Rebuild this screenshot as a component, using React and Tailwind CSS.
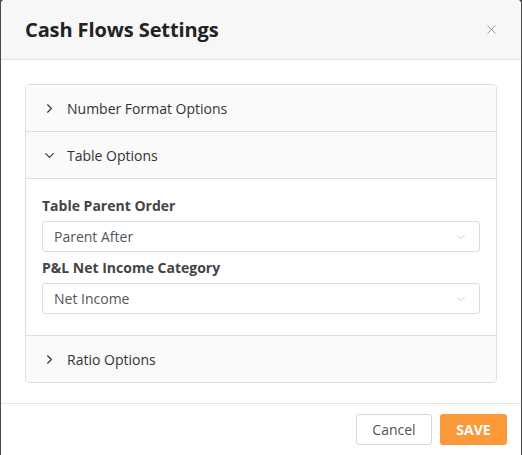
import { ChevronRight, ChevronDown, X } from 'lucide-react'

function Row({ title, open }) {
  return (
    <div className="flex items-center h-[46px] bg-[#fafafa] pl-[16px] text-[14px] text-[#333]">
      {open ? (
        <ChevronDown size={15} strokeWidth={1.8} className="text-[#333]" />
      ) : (
        <ChevronRight size={15} strokeWidth={1.8} className="text-[#333]" />
      )}
      <span className="ml-[10px]">{title}</span>
    </div>
  )
}

function Select({ value }) {
  return (
    <div className="flex items-center justify-between h-[31px] border border-[#dcdcdc] rounded-[3px] px-[11px] text-[14px] text-[#555] bg-white">
      <span>{value}</span>
      <ChevronDown size={14} strokeWidth={1.2} className="text-[#bbb]" />
    </div>
  )
}

export default function App() {
  return (
    <div className="w-[522px] h-[455px] bg-[#4a4a4a] px-[1px] overflow-hidden" style={{ fontFamily: '"Open Sans", sans-serif' }}>
      <div className="h-full bg-white rounded-t-[4px] flex flex-col">
        <div className="h-[60px] bg-[#f7f7f7] border-b border-[#e3e3e3] flex items-center justify-between pl-[24px] pr-[22px] rounded-t-[4px] shrink-0">
          <h2 className="text-[20px] font-bold text-[#222] tracking-[-0.1px]">Cash Flows Settings</h2>
          <X size={15} strokeWidth={1.3} className="text-[#888]" />
        </div>
        <div className="px-[24px] pt-[24px] pb-[20px] border-b border-[#e5e5e5]">
          <div className="border border-[#dedede] rounded-[4px] overflow-hidden">
            <Row title="Number Format Options" />
            <div className="border-t border-[#dedede]">
              <Row title="Table Options" open />
            </div>
            <div className="border-t border-[#dedede] bg-white px-[16px] pt-[17px] pb-[21px]">
              <div className="text-[14px] font-bold text-[#444] leading-[20px]">Table Parent Order</div>
              <div className="mt-[5px]">
                <Select value="Parent After" />
              </div>
              <div className="text-[14px] font-bold text-[#444] leading-[20px] mt-[6px]">P&amp;L Net Income Category</div>
              <div className="mt-[5px]">
                <Select value="Net Income" />
              </div>
            </div>
            <div className="border-t border-[#dedede]">
              <Row title="Ratio Options" />
            </div>
          </div>
        </div>
        <div className="flex justify-end gap-[8px] pr-[14px] pt-[10px]">
          <button className="h-[31px] w-[76px] border border-[#d6d6d6] rounded-[3px] bg-white text-[14px] text-[#555]">Cancel</button>
          <button className="h-[31px] w-[67px] rounded-[3px] bg-[#fa983a] text-[14px] font-bold text-white">SAVE</button>
        </div>
      </div>
    </div>
  )
}
